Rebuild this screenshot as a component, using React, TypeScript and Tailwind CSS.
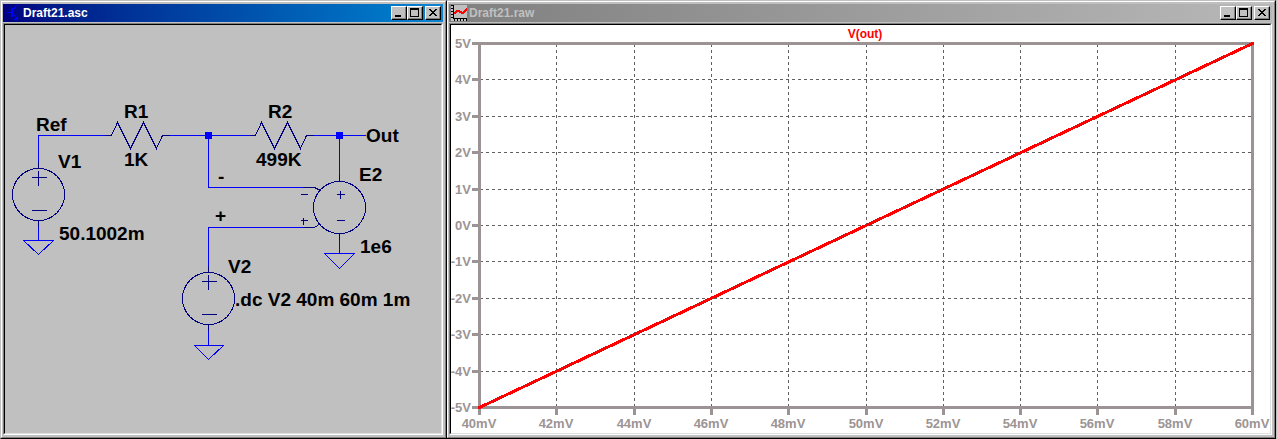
import type { ReactNode } from "react";

interface WindowProps {
  title: string;
  icon: ReactNode;
  active?: boolean;
  className?: string;
  children: ReactNode;
}

interface Label {
  x: number;
  y: number;
  text: string;
}

const LABELS: Label[] = [
  { x: 36, y: 131, text: "Ref" },
  { x: 124, y: 118, text: "R1" },
  { x: 124, y: 166, text: "1K" },
  { x: 58, y: 168, text: "V1" },
  { x: 59, y: 240, text: "50.1002m" },
  { x: 268, y: 118, text: "R2" },
  { x: 256, y: 166, text: "499K" },
  { x: 366, y: 142, text: "Out" },
  { x: 359, y: 181, text: "E2" },
  { x: 360, y: 253, text: "1e6" },
  { x: 218, y: 183, text: "-" },
  { x: 215, y: 222, text: "+" },
  { x: 228, y: 273, text: "V2" },
  { x: 235, y: 306, text: ".dc V2 40m 60m 1m" },
];

const VOLTS = [5, 4, 3, 2, 1, 0, -1, -2, -3, -4, -5];
const MILLIVOLTS = [40, 42, 44, 46, 48, 50, 52, 54, 56, 58, 60];

// Plot area in drawing units
const PLOT = { left: 479, right: 1252, top: 43, bottom: 407 };

const xOf = (mv: number) => Math.round(PLOT.left + ((mv - 40) / 20) * (PLOT.right - PLOT.left));
const yOf = (v: number) => Math.round(PLOT.top + ((5 - v) / 10) * (PLOT.bottom - PLOT.top));

export default function App() {
  return (
    <main className="grid grid-cols-[447fr_830fr] items-start bg-[#c0c0c0] font-['Liberation_Sans',Arial,sans-serif]">
      <Window title="Draft21.asc" icon={<TransistorIcon />} active className="relative z-10">
        <Schematic />
      </Window>
      <Window title="Draft21.raw" icon={<PlotIcon />} className="-ml-px mr-px">
        <Plot />
      </Window>
    </main>
  );
}

function Window({ title, icon, active = false, className = "", children }: WindowProps) {
  const bar = active
    ? "bg-linear-to-r from-[#000080] to-[#1084d0] text-white"
    : "bg-linear-to-r from-[#808080] to-[#b8b8b8] text-[#c0c0c0]";

  return (
    <section
      className={`border border-t-[#c0c0c0] border-l-[#c0c0c0] border-r-black border-b-black bg-[#c0c0c0] ${className}`}
    >
      <div className="border border-t-white border-l-white border-r-[#808080] border-b-[#808080] pt-[2px] pr-[2px] pb-[2px] pl-px">
        <header className={`mb-px flex h-[18px] items-center pr-[2px] pl-[2px] ${bar}`}>
          {icon}
          <h1 className="ml-[2px] flex-1 truncate text-[12px] leading-[18px] font-bold">{title}</h1>
          <div className="flex">
            <TitleButton label="Minimize">
              <path d="M3 8h6v2h-6z" />
            </TitleButton>
            <TitleButton label="Maximize">
              <path fillRule="evenodd" d="M2 1h9v9h-9zM3 3v6h7v-6z" />
            </TitleButton>
            <TitleButton label="Close" className="ml-[2px]">
              <path d="M3 2h2v1h1v1h2v-1h1v-1h2v1h-1v1h-1v1h-1v1h1v1h1v1h1v1h-2v-1h-1v-1h-2v1h-1v1h-2v-1h1v-1h1v-1h1v-1h-1v-1h-1v-1h-1z" />
            </TitleButton>
          </div>
        </header>
        <div className="border border-t-[#808080] border-l-[#808080] border-r-white border-b-white">
          <div className="border border-t-black border-l-black border-r-[#dfdfdf] border-b-[#dfdfdf]">
            {children}
          </div>
        </div>
      </div>
    </section>
  );
}

function TitleButton({ label, className = "", children }: { label: string; className?: string; children: ReactNode }) {
  return (
    <button
      type="button"
      aria-label={label}
      className={`h-[14px] w-[16px] border border-t-white border-l-white border-r-black border-b-black bg-[#c0c0c0] shadow-[inset_-1px_-1px_0_#808080] ${className}`}
    >
      <svg viewBox="0 0 14 12" className="block h-[12px] w-[14px]" fill="black" shapeRendering="crispEdges">
        {children}
      </svg>
    </button>
  );
}

function TransistorIcon() {
  return (
    <svg viewBox="0 0 16 16" className="h-[16px] w-[16px]" shapeRendering="crispEdges">
      <path d="M6 3h2v9h-2zM2 7h4v1h-4z" fill="#0000ff" />
      <path d="M8 5l4-5M8 9l5 5" stroke="#0000ff" fill="none" />
      <path d="M13 10v5h-5l2-2h1v-1h1z" fill="#0000ff" />
    </svg>
  );
}

function PlotIcon() {
  return (
    <svg viewBox="0 0 16 16" className="h-[16px] w-[16px]" shapeRendering="crispEdges">
      <path d="M0 0h16v16h-16z" fill="#c0c0c0" />
      <path
        d="M2 0h1v13h13v1h-14zM0 0h2v1h-2zM0 3h2v1h-2zM0 6h2v1h-2zM0 9h2v1h-2zM0 12h2v1h-2zM3 14h1v2h-1zM6 14h1v2h-1zM9 14h1v2h-1zM12 14h1v2h-1zM15 14h1v2h-1z"
        fill="black"
      />
      <path d="M3 9l3-3h2l3 2h1l4-4" stroke="#ff0000" strokeWidth="2" fill="none" />
    </svg>
  );
}

function Schematic() {
  return (
    <svg viewBox="5 25 436 408" className="block h-auto w-full bg-[#c0c0c0]" role="img" aria-label="Circuit schematic">
      <g transform="translate(.5 .5)" fill="none" shapeRendering="crispEdges">
        {/* Wires and grounds */}
        <g stroke="#0000ff">
          <path d="M38 161V135H104M169 135H249M313 135H365M208 135V187H302M339 135V174" />
          <path d="M208 265V227H302" />
          <path d="M38 226V240M339 239V253M208 330V345" />
          <path d="M23 240H53L38 254ZM324 253H354L339 268ZM194 345H223L208 359Z" />
        </g>
        {/* Components */}
        <g stroke="#000080">
          <path d="M104 135H111L117 122L130 148L143 122L156 148L162 135H169" />
          <path d="M249 135H255L261 122L274 148L287 122L300 148L306 135H313" />
          <Source cx={38} cy={194} />
          <Source cx={208} cy={298} />
          <circle cx="339" cy="207" r="26" />
          <path d="M339 174V181M339 233V239" />
          <path d="M302 187H314L320 190M302 227H314L320 223" />
          <path d="M336 194H344M340 190V198M336 220H344" />
          <path d="M300 194H307M300 220H307M303 217V224" />
        </g>
      </g>
      <path d="M205 132h7v7h-7zM336 132h7v7h-7z" fill="#0000ff" />
      <g className="text-[19px] font-bold" fill="black">
        {LABELS.map((l) => (
          <text key={`${l.text}-${l.x}-${l.y}`} x={l.x} y={l.y}>
            {l.text}
          </text>
        ))}
      </g>
    </svg>
  );
}

function Source({ cx, cy }: { cx: number; cy: number }) {
  return (
    <g transform={`translate(${cx} ${cy})`}>
      <circle r="26" />
      <path d="M0 -33V-26M0 26V32M-7 -17H8M0 -24V-9M-7 16H8" />
    </g>
  );
}

function Plot() {
  const { left, right, top, bottom } = PLOT;

  return (
    <svg viewBox="451 25 819 408" className="block h-auto w-full bg-white" role="img" aria-label="V(out) plot">
      <g transform="translate(.5 .5)" fill="none" shapeRendering="crispEdges">
        <g stroke="#606060" strokeDasharray="3 3">
          {MILLIVOLTS.slice(1, -1).map((mv) => (
            <path key={mv} d={`M${xOf(mv)} ${top}V${bottom}`} />
          ))}
          {VOLTS.slice(1, -1).map((v) => (
            <path key={v} d={`M${left} ${yOf(v)}H${right}`} />
          ))}
        </g>
        <g stroke="#9c9494" strokeWidth="3">
          <rect x={left} y={top} width={right - left} height={bottom - top} />
          {MILLIVOLTS.map((mv) => (
            <path key={mv} d={`M${xOf(mv)} ${bottom}v7`} />
          ))}
          {VOLTS.map((v) => (
            <path key={v} d={`M${left} ${yOf(v)}h-8`} />
          ))}
        </g>
        <path d={`M${left} ${bottom}L${right} ${top}`} stroke="#ff0000" strokeWidth="3" strokeLinecap="square" />
      </g>
      <g className="text-[13px] font-bold" fill="#9c9494">
        {VOLTS.map((v) => (
          <text key={v} x={471} y={yOf(v) + 5} textAnchor="end">
            {v}V
          </text>
        ))}
        {MILLIVOLTS.map((mv) => (
          <text key={mv} x={xOf(mv)} y={428} textAnchor="middle">
            {mv}mV
          </text>
        ))}
      </g>
      <text x={865} y={38} textAnchor="middle" fill="#ff0000" className="text-[12px] font-bold">
        V(out)
      </text>
    </svg>
  );
}
